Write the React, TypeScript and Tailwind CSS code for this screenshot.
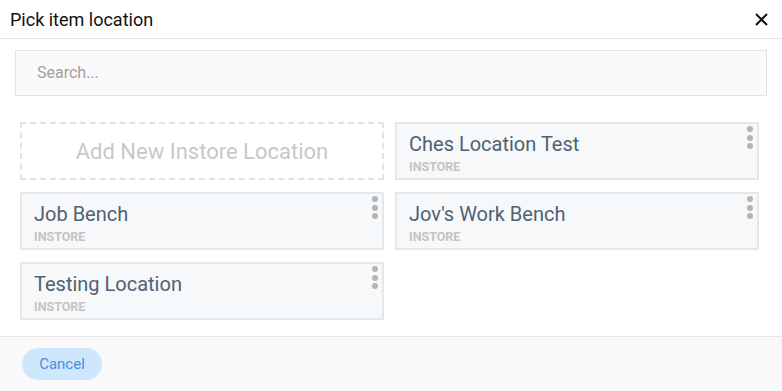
import React from "react";

type Location = { name: string; kind: string };

const locations: Location[] = [
  { name: "Ches Location Test", kind: "INSTORE" },
  { name: "Job Bench", kind: "INSTORE" },
  { name: "Jov's Work Bench", kind: "INSTORE" },
  { name: "Testing Location", kind: "INSTORE" },
];

function Kebab() {
  return (
    <div className="flex flex-col gap-[2.5px] pt-[2px] pr-[4px]">
      <span className="w-[6px] h-[6px] rounded-full bg-[#b4b4b4]" />
      <span className="w-[6px] h-[6px] rounded-full bg-[#b4b4b4]" />
      <span className="w-[6px] h-[6px] rounded-full bg-[#b4b4b4]" />
    </div>
  );
}

function LocationCard({ loc }: { loc: Location }) {
  return (
    <div className="h-[58px] border-2 border-[#e3e8ed] bg-[#f6f8fa] flex justify-between">
      <div className="pl-3 pt-[8px] flex flex-col">
        <div className="text-[20px] leading-[24px] text-[#506172]">{loc.name}</div>
        <div className="text-[12.5px] leading-[16px] font-bold text-[#c4c4c4] mt-[3px]">{loc.kind}</div>
      </div>
      <Kebab />
    </div>
  );
}

export default function App() {
  return (
    <div className="w-[782px] h-[391px] bg-white flex flex-col font-['Roboto',sans-serif]">
      <div className="h-[39px] flex items-center justify-between pl-[10px] pr-[14px] border-b border-[#e6e6e6]">
        <div className="text-[18px] text-[#111]">Pick item location</div>
        <svg width="13" height="13" viewBox="0 0 13 13">
          <path d="M1 1 L12 12 M12 1 L1 12" stroke="#111" strokeWidth="2" />
        </svg>
      </div>
      <div className="flex-1 flex flex-col">
        <div className="px-[15px] pt-[11px]">
          <div className="h-[46px] border border-[#e3e3e3] bg-[#fafafa] flex items-center pl-[21px] text-[16px] text-[#a0a0a0]">
            Search...
          </div>
        </div>
        <div className="grid grid-cols-2 gap-x-[11px] gap-y-[12px] pl-[20px] pr-[23px] pt-[26px]">
          <div className="h-[58px] border-2 border-dashed border-[#e2e2e2] flex items-center justify-center text-[22px] text-[#c8c8c8]">
            Add New Instore Location
          </div>
          {locations.map((loc) => (
            <LocationCard key={loc.name} loc={loc} />
          ))}
        </div>
      </div>
      <div className="h-[55px] border-t border-[#e6e6e6] bg-[#f9f9f9] flex items-center pl-[22px]">
        <button className="h-[32px] w-[80px] rounded-full bg-[#cfe7fd] text-[15px] text-[#4a8ee0]">
          Cancel
        </button>
      </div>
    </div>
  );
}
